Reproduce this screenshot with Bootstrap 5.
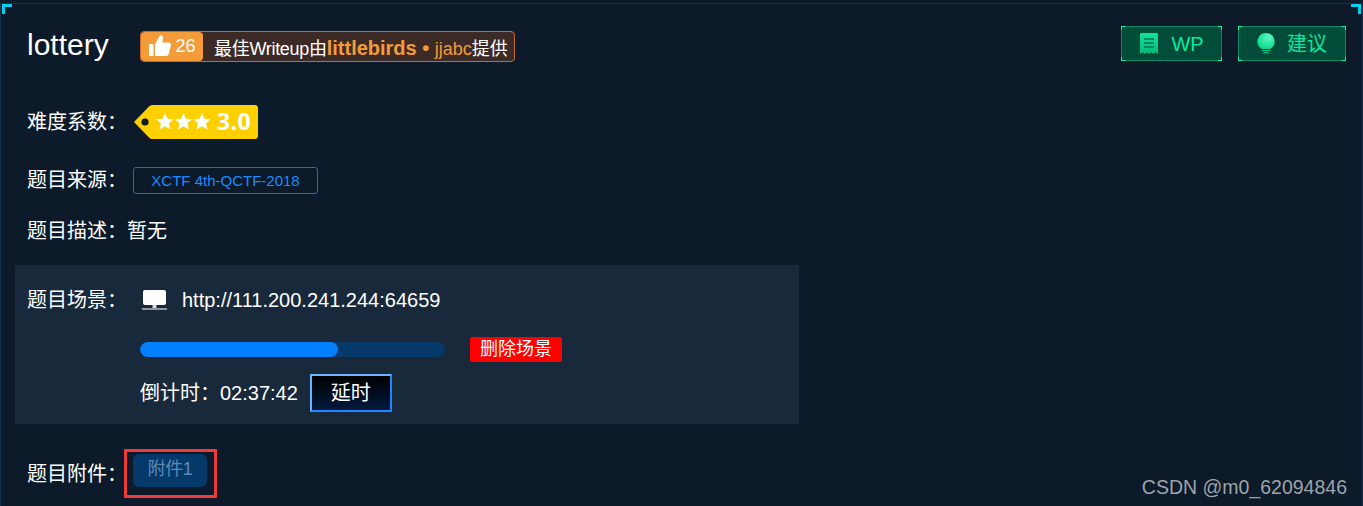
<!DOCTYPE html>
<html lang="zh">
<head>
<meta charset="utf-8">
<title>lottery</title>
<link href="https://cdn.jsdelivr.net/npm/bootstrap@5.3.0/dist/css/bootstrap.min.css" rel="stylesheet">
<style>
html,body{height:506px;overflow:hidden}
body{background:#0c1a29;color:#fff;font-family:"Liberation Sans","Noto Sans CJK SC",sans-serif;font-size:20px;line-height:1.5}
.cj-panel{position:relative;height:503px;margin:3px 0 0 0;border:1px solid #16304a;border-width:1px 1px 0 1px;padding:0 14px}
.cj-corner{position:absolute;top:0;width:10px;height:10px;border-top:3px solid #00d0f0}
.cj-corner-l{left:1px;border-left:3px solid #00d0f0}
.cj-corner-r{right:1px;border-right:3px solid #00d0f0}
.cj-head{height:84px;padding-left:12px}
.cj-title{font-size:30px;font-weight:400;margin:-2px 0 0;line-height:1;width:113px}
.cj-wp{display:flex;align-items:center;height:31px;width:375px;border:1px solid #c9692c;border-radius:4px;background:#3c2a27;font-size:18px;white-space:nowrap}
.cj-like{display:flex;align-items:center;justify-content:center;gap:3px;flex:none;width:62px;height:29px;background:#f49b3a;border-radius:4px;color:#fff;font-size:18px}
.cj-wp-text{margin-left:11px;padding-top:4px;line-height:26px}
.cj-wp-tight{letter-spacing:-.3px}
.cj-wp-text b{color:#f49a3a;font-size:20px}
.cj-wp-text span.cj-wp-user{color:#f49a3a}
.cj-actions{margin-left:auto;margin-right:2px;margin-top:-5px}
.cj-act{position:relative;display:flex;align-items:center;justify-content:center;gap:12px;height:35px;background:#024d39;border:1px solid #0a8a62;color:#0de8a0;font-size:20px;border-radius:0;padding:0}
.cj-act:hover{background:#024d39;color:#0de8a0;border-color:#0a8a62}
.cj-act::before{content:"";position:absolute;width:100%;height:100%;left:-1px;top:-1px;padding:1px;box-sizing:content-box;background:
linear-gradient(#18f0a8,#18f0a8) 0 0/4px 1px no-repeat,linear-gradient(#18f0a8,#18f0a8) 0 0/1px 4px no-repeat,
linear-gradient(#18f0a8,#18f0a8) 100% 0/4px 1px no-repeat,linear-gradient(#18f0a8,#18f0a8) 100% 0/1px 4px no-repeat,
linear-gradient(#18f0a8,#18f0a8) 0 100%/4px 1px no-repeat,linear-gradient(#18f0a8,#18f0a8) 0 100%/1px 4px no-repeat,
linear-gradient(#18f0a8,#18f0a8) 100% 100%/4px 1px no-repeat,linear-gradient(#18f0a8,#18f0a8) 100% 100%/1px 4px no-repeat}
.cj-act-wp{width:101px}
.cj-act-tip{width:108px}
.cj-row{display:flex;align-items:center;padding-left:12px}
.cj-label{width:106px;flex:none;white-space:nowrap}
.cj-label-auto{width:auto}
.cj-label-host{width:104px}
.cj-row-diff{height:44px;margin-top:12px}
.cj-row-src{height:30px;margin-top:21px}
.cj-row-desc{height:30px;margin-top:21px}
.cj-source{display:block;width:185px;height:27px;line-height:25px;text-align:center;border:1px solid #2f6aa8;border-radius:3px;color:#1a8cff;font-size:15px}
.cj-scene{width:784px;height:159px;margin-top:19px;background:#18293c;padding:20px 12px 0}
.cj-host{height:30px}
.cj-host svg{margin:0 15px 0 11px}
.cj-progress-row{display:flex;align-items:center;margin:22px 0 0 113px;height:25px}
.cj-progress{width:305px;height:15px;background:#04396a;border-radius:8px;overflow:hidden}
.cj-progress-bar{height:100%;background:#0080ff;border-radius:8px}
.cj-del{margin-left:25px;width:92px;height:25px;line-height:25px;text-align:center;background:#f00;border-radius:2px;font-size:18px}
.cj-timer{display:flex;align-items:center;margin:12px 0 0 113px;height:38px}
.cj-delay{width:82px;height:38px;margin-left:12px;padding:0;color:#fff;font-size:20px;background:linear-gradient(#000,#011a3e);border:2px solid;border-color:#6db3ff #1a86ff #1a86ff #6db3ff;border-radius:0}
.cj-row-file{margin-top:25px;height:49px}
.cj-label-file{width:97px}
.cj-mark{display:flex;align-items:flex-start;width:93px;height:49px;border:3px solid #ef3a3a;padding:2px 0 0 6px}
.cj-file{display:block;width:74px;height:33px;line-height:31px;text-align:center;background:#04396a;border-radius:6px;color:#5b8bb8;font-size:18px;letter-spacing:-.3px}
.cj-watermark{position:absolute;right:15px;bottom:7px;color:#9ea4aa;font-size:19.500px;line-height:1.2}
.cj-tag-text{font:700 23px "Open Sans",sans-serif;fill:#fff;letter-spacing:.4px}
</style>
</head>
<body>
<div class="cj-panel">
  <i class="cj-corner cj-corner-l"></i><i class="cj-corner cj-corner-r"></i>

  <div class="cj-head d-flex align-items-center">
    <h1 class="cj-title">lottery</h1>
    <div class="cj-wp">
      <span class="cj-like">
        <svg width="24" height="24" viewBox="0 0 24 24" aria-hidden="true"><path fill="#fff" d="M1 10h4.500v12H1z"/><path fill="#fff" d="M7 10.500 11.500 2c.3-.6 1-.9 1.700-.7 1.400.4 2.100 1.700 1.800 3.100L14.200 8.500h6.600c1.500 0 2.600 1.400 2.200 2.900l-2.300 8.700c-.3 1.100-1.300 1.900-2.400 1.900H7z"/></svg>
        26
      </span>
      <span class="cj-wp-text"><span class="cj-wp-tight">最佳Writeup由</span><b>littlebirds • </b><span class="cj-wp-user">jjabc</span>提供</span>
    </div>
    <div class="cj-actions d-flex gap-3">
      <a class="btn cj-act cj-act-wp" href="#">
        <svg width="20" height="21" viewBox="0 0 20 21" aria-hidden="true"><defs><linearGradient id="g1" x1="0" y1="0" x2="0" y2="1"><stop offset="0" stop-color="#0fe39b"/><stop offset="1" stop-color="#07b878"/></linearGradient></defs><path fill="url(#g1)" d="M1 1.500C1 .7 1.700 0 2.500 0h15c.8 0 1.500.7 1.500 1.500V21l-2.500-1.800L14.300 21 12 19.200 10 21l-2-1.800L5.700 21l-2.200-1.800L1 21z"/><path fill="#06875f" d="M5 5h10v2H5zM5 9h10v2H5zM5 13h10v2H5z"/></svg>
        WP
      </a>
      <a class="btn cj-act cj-act-tip" href="#">
        <svg width="18" height="21" viewBox="0 0 18 21" aria-hidden="true"><defs><radialGradient id="g2" cx=".65" cy=".3" r=".75"><stop offset="0" stop-color="#5ff5c0"/><stop offset="1" stop-color="#08d98c"/></radialGradient></defs><path fill="url(#g2)" d="M9 0a8.500 8.500 0 0 1 4.500 15.700V16h-9v-.3A8.500 8.500 0 0 1 9 0z"/><path fill="#0bb97c" d="M5 17h8v1.300H5zM6.500 19h5v1.500h-5z"/></svg>
        建议
      </a>
    </div>
  </div>

  <div class="cj-row cj-row-diff">
    <span class="cj-label">难度系数：</span>
    <svg width="126" height="36" viewBox="0 0 126 36" role="img" aria-label="3.0">
      <path fill="#ffd000" d="M1 18 16 2.500C17 1.500 18 1 19 1h103c1.700 0 3 1.300 3 3v28c0 1.700-1.300 3-3 3H19c-1 0-2-.5-3-1.500z"/>
      <circle cx="12" cy="18" r="3.600" fill="#0c1a29"/>
      <polygon fill="#fff" points="32,9 34.500,14.800 40.800,15.300 36,19.300 37.500,25.500 32,22.200 26.500,25.500 28,19.300 23.200,15.300 29.500,14.800"/>
      <polygon fill="#fff" points="50.500,9 53,14.800 59.300,15.300 54.500,19.300 56,25.500 50.500,22.200 45,25.500 46.500,19.300 41.700,15.300 48,14.800"/>
      <polygon fill="#fff" points="69,9 71.500,14.800 77.800,15.300 73,19.300 74.500,25.500 69,22.200 63.500,25.500 65,19.300 60.200,15.300 66.500,14.800"/>
      <text class="cj-tag-text" x="84" y="26">3.0</text>
    </svg>
  </div>

  <div class="cj-row cj-row-src">
    <span class="cj-label">题目来源：</span>
    <a class="cj-source text-decoration-none" href="#">XCTF 4th-QCTF-2018</a>
  </div>

  <div class="cj-row cj-row-desc">
    <span class="cj-label cj-label-auto">题目描述：</span>
    <span>暂无</span>
  </div>

  <div class="cj-scene">
    <div class="d-flex align-items-center cj-host">
      <span class="cj-label cj-label-host">题目场景：</span>
      <svg width="25" height="22" viewBox="0 0 25 22" aria-hidden="true"><rect x="1" y="1" width="23" height="15" rx="2" fill="#fff"/><path fill="#d8d8d8" d="M10.500 16h4v3h-4z"/><path fill="#8f979f" d="M0 19h25v2H0z"/></svg>
      <span>http://111.200.241.244:64659</span>
    </div>
    <div class="cj-progress-row">
      <div class="cj-progress"><div class="cj-progress-bar" style="width:65%"></div></div>
      <span class="cj-del">删除场景</span>
    </div>
    <div class="cj-timer">
      <span>倒计时：02:37:42</span>
      <button type="button" class="btn cj-delay">延时</button>
    </div>
  </div>

  <div class="cj-row cj-row-file">
    <span class="cj-label cj-label-file">题目附件：</span>
    <div class="cj-mark"><a class="cj-file text-decoration-none" href="#">附件1</a></div>
  </div>

  <div class="cj-watermark">CSDN @m0_62094846</div>
</div>
</body>
</html>
